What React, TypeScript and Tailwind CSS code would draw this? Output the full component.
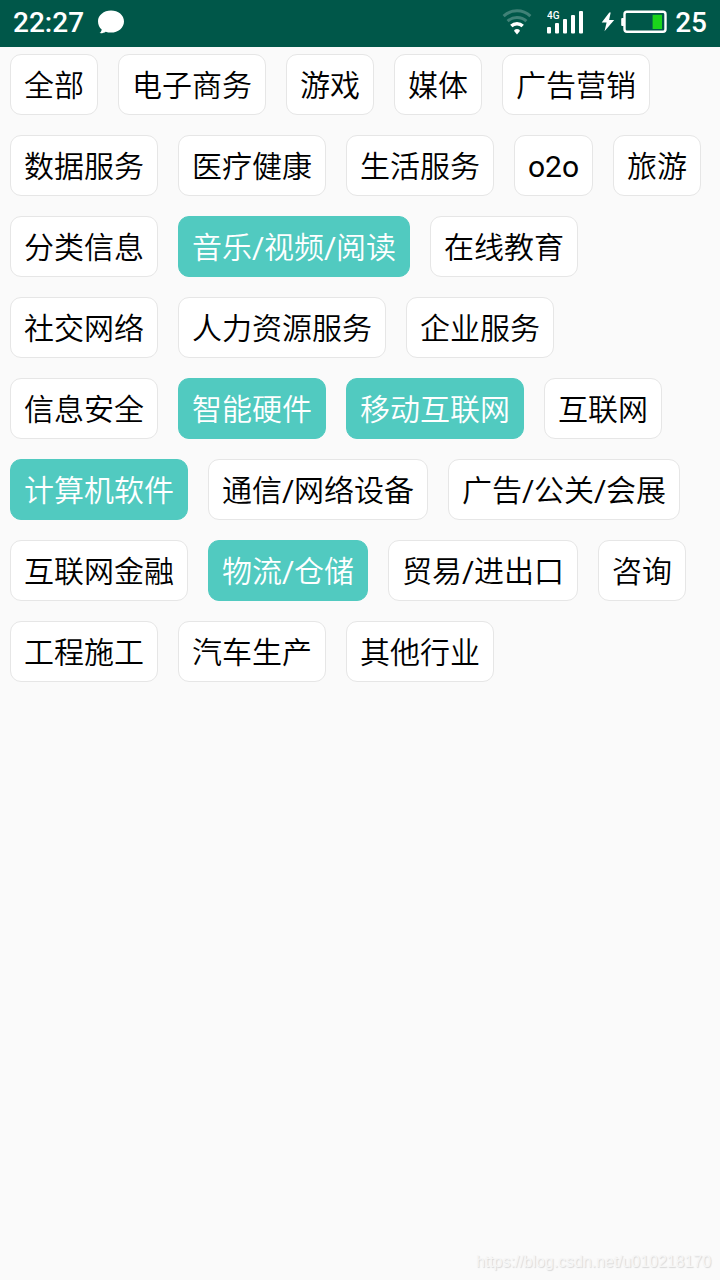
// Industry picker: status bar + wrapping list of selectable tags
import { useState } from "react";

// ─── Data ───
const INDUSTRIES: string[] = [
  "全部", "电子商务", "游戏", "媒体", "广告营销",
  "数据服务", "医疗健康", "生活服务", "o2o", "旅游",
  "分类信息", "音乐/视频/阅读", "在线教育",
  "社交网络", "人力资源服务", "企业服务",
  "信息安全", "智能硬件", "移动互联网", "互联网",
  "计算机软件", "通信/网络设备", "广告/公关/会展",
  "互联网金融", "物流/仓储", "贸易/进出口", "咨询",
  "工程施工", "汽车生产", "其他行业",
];

const DEFAULT_SELECTED = ["音乐/视频/阅读", "智能硬件", "移动互联网", "计算机软件", "物流/仓储"];

// ─── Status bar icons ───
function MessageIcon() {
  return (
    <svg className="ml-[13px] h-[26px] w-[28px]" viewBox="0 0 28 26" fill="#fff">
      <path d="M14 1.500C6.800 1.500 1 6.300 1 12.200c0 3.400 1.400 6.300 3.700 8.300-.2 1.600-.8 2.700-2.200 3.600 2.300.3 4.500-.2 6.200-1.400 1.600.6 3.400.9 5.300.9 7.200 0 13-5 13-11.200S21.200 1.500 14 1.500z" />
    </svg>
  );
}

function WifiIcon() {
  return (
    <svg className="h-[26px] w-[30px]" viewBox="0 0 30 26" fill="none" strokeWidth="3">
      <path d="M1.600 7.200a19.500 19.500 0 0 1 26.800 0" stroke="#408177" />
      <path d="M5.600 12.200a13.700 13.700 0 0 1 18.800 0" stroke="#408177" />
      <path d="M9.300 17a8.300 8.300 0 0 1 11.400 0" stroke="#fff" strokeWidth="3.400" />
      <path d="M15 20c1.600 0 2.900.9 2.900 2.100L15 25.600l-2.900-3.500c0-1.200 1.300-2.100 2.900-2.100z" fill="#fff" />
    </svg>
  );
}

function SignalIcon() {
  return (
    <svg className="ml-[15px] h-[26px] w-[38px]" viewBox="0 0 38 26" fill="#fff">
      <text x="0" y="9.500" fontSize="11.500" fontWeight="500" fontFamily="Roboto, sans-serif" textLength="12.500" lengthAdjust="spacingAndGlyphs">
        4G
      </text>
      <rect x="0" y="18" width="4" height="6.500" rx="1" />
      <rect x="8" y="14" width="4" height="10.500" rx="1" />
      <rect x="16" y="10" width="4" height="14.500" rx="1" />
      <rect x="24" y="6" width="4" height="18.500" rx="1" />
      <rect x="32" y="2" width="4" height="22.500" rx="1" />
    </svg>
  );
}

function BatteryIcon() {
  return (
    <svg className="ml-[16px] h-[26px] w-[66px]" viewBox="0 0 66 26">
      <path d="M8.300 3.500 0.700 13.600H5.600L3.500 22.200 13.200 11H8.100L9.700 3.500z" fill="#fff" />
      <rect x="20.200" y="9" width="3" height="8" rx="1" fill="#fff" />
      <rect x="23.500" y="2.800" width="41" height="20" rx="2.500" fill="none" stroke="#fff" strokeWidth="2.400" />
      <rect x="51.600" y="5.800" width="9.400" height="14.200" fill="#1bd41b" />
    </svg>
  );
}

function StatusBar() {
  return (
    <header className="flex h-[47px] items-center justify-between bg-[#005749] pb-[3px] pl-[13px] pr-[13px] font-['Roboto',sans-serif] text-[28px] font-medium leading-none text-white">
      <div className="flex items-center">
        <span className="pt-px">22:27</span>
        <MessageIcon />
      </div>
      <div className="flex items-center">
        <WifiIcon />
        <SignalIcon />
        <BatteryIcon />
        <span className="ml-[8px] pt-px">25</span>
      </div>
    </header>
  );
}

// ─── Tag ───
interface TagProps {
  label: string;
  selected: boolean;
  onToggle: () => void;
}

function Tag({ label, selected, onToggle }: TagProps) {
  // odd parts are latin runs, they use the regular weight
  const parts = label.split(/([a-z0-9/]+)/i);

  return (
    <button
      type="button"
      onClick={onToggle}
      className={`flex h-[61px] items-center whitespace-nowrap rounded-[11px] border px-[13px] pt-[3px] text-[30px] font-[350] leading-none ${
        selected
          ? "border-[#51cac0] bg-[#51cac0] text-white"
          : "border-[#e6e6e6] bg-white text-black"
      }`}
    >
      <span>
        {parts.map((part, i) =>
          i % 2 === 1 ? (
            <span key={i} className={part === "/" ? "font-normal tracking-[-0.4px]" : "font-normal"}>
              {part}
            </span>
          ) : (
            part
          )
        )}
      </span>
    </button>
  );
}

export default function App() {
  const [selected, setSelected] = useState<string[]>(DEFAULT_SELECTED);

  const toggle = (label: string) =>
    setSelected((prev) =>
      prev.includes(label) ? prev.filter((item) => item !== label) : [...prev, label]
    );

  return (
    <div className="flex h-[1280px] w-[720px] flex-col overflow-hidden bg-[#fafafa] font-['Roboto','Noto_Sans_CJK_SC',sans-serif]">
      <StatusBar />
      <main className="flex flex-1 flex-wrap content-start gap-5 px-[10px] pt-[7px]">
        {INDUSTRIES.map((label) => (
          <Tag
            key={label}
            label={label}
            selected={selected.includes(label)}
            onToggle={() => toggle(label)}
          />
        ))}
      </main>
      <footer className="pb-[9px] pr-[9px] text-right font-['Liberation_Sans',Arial,sans-serif] text-[16px] leading-[18px] tracking-[-0.05px] text-[#f6f6f6] [text-shadow:1px_1px_1px_#d8d8d8]">
        https://blog.csdn.net/u010218170
      </footer>
    </div>
  );
}
